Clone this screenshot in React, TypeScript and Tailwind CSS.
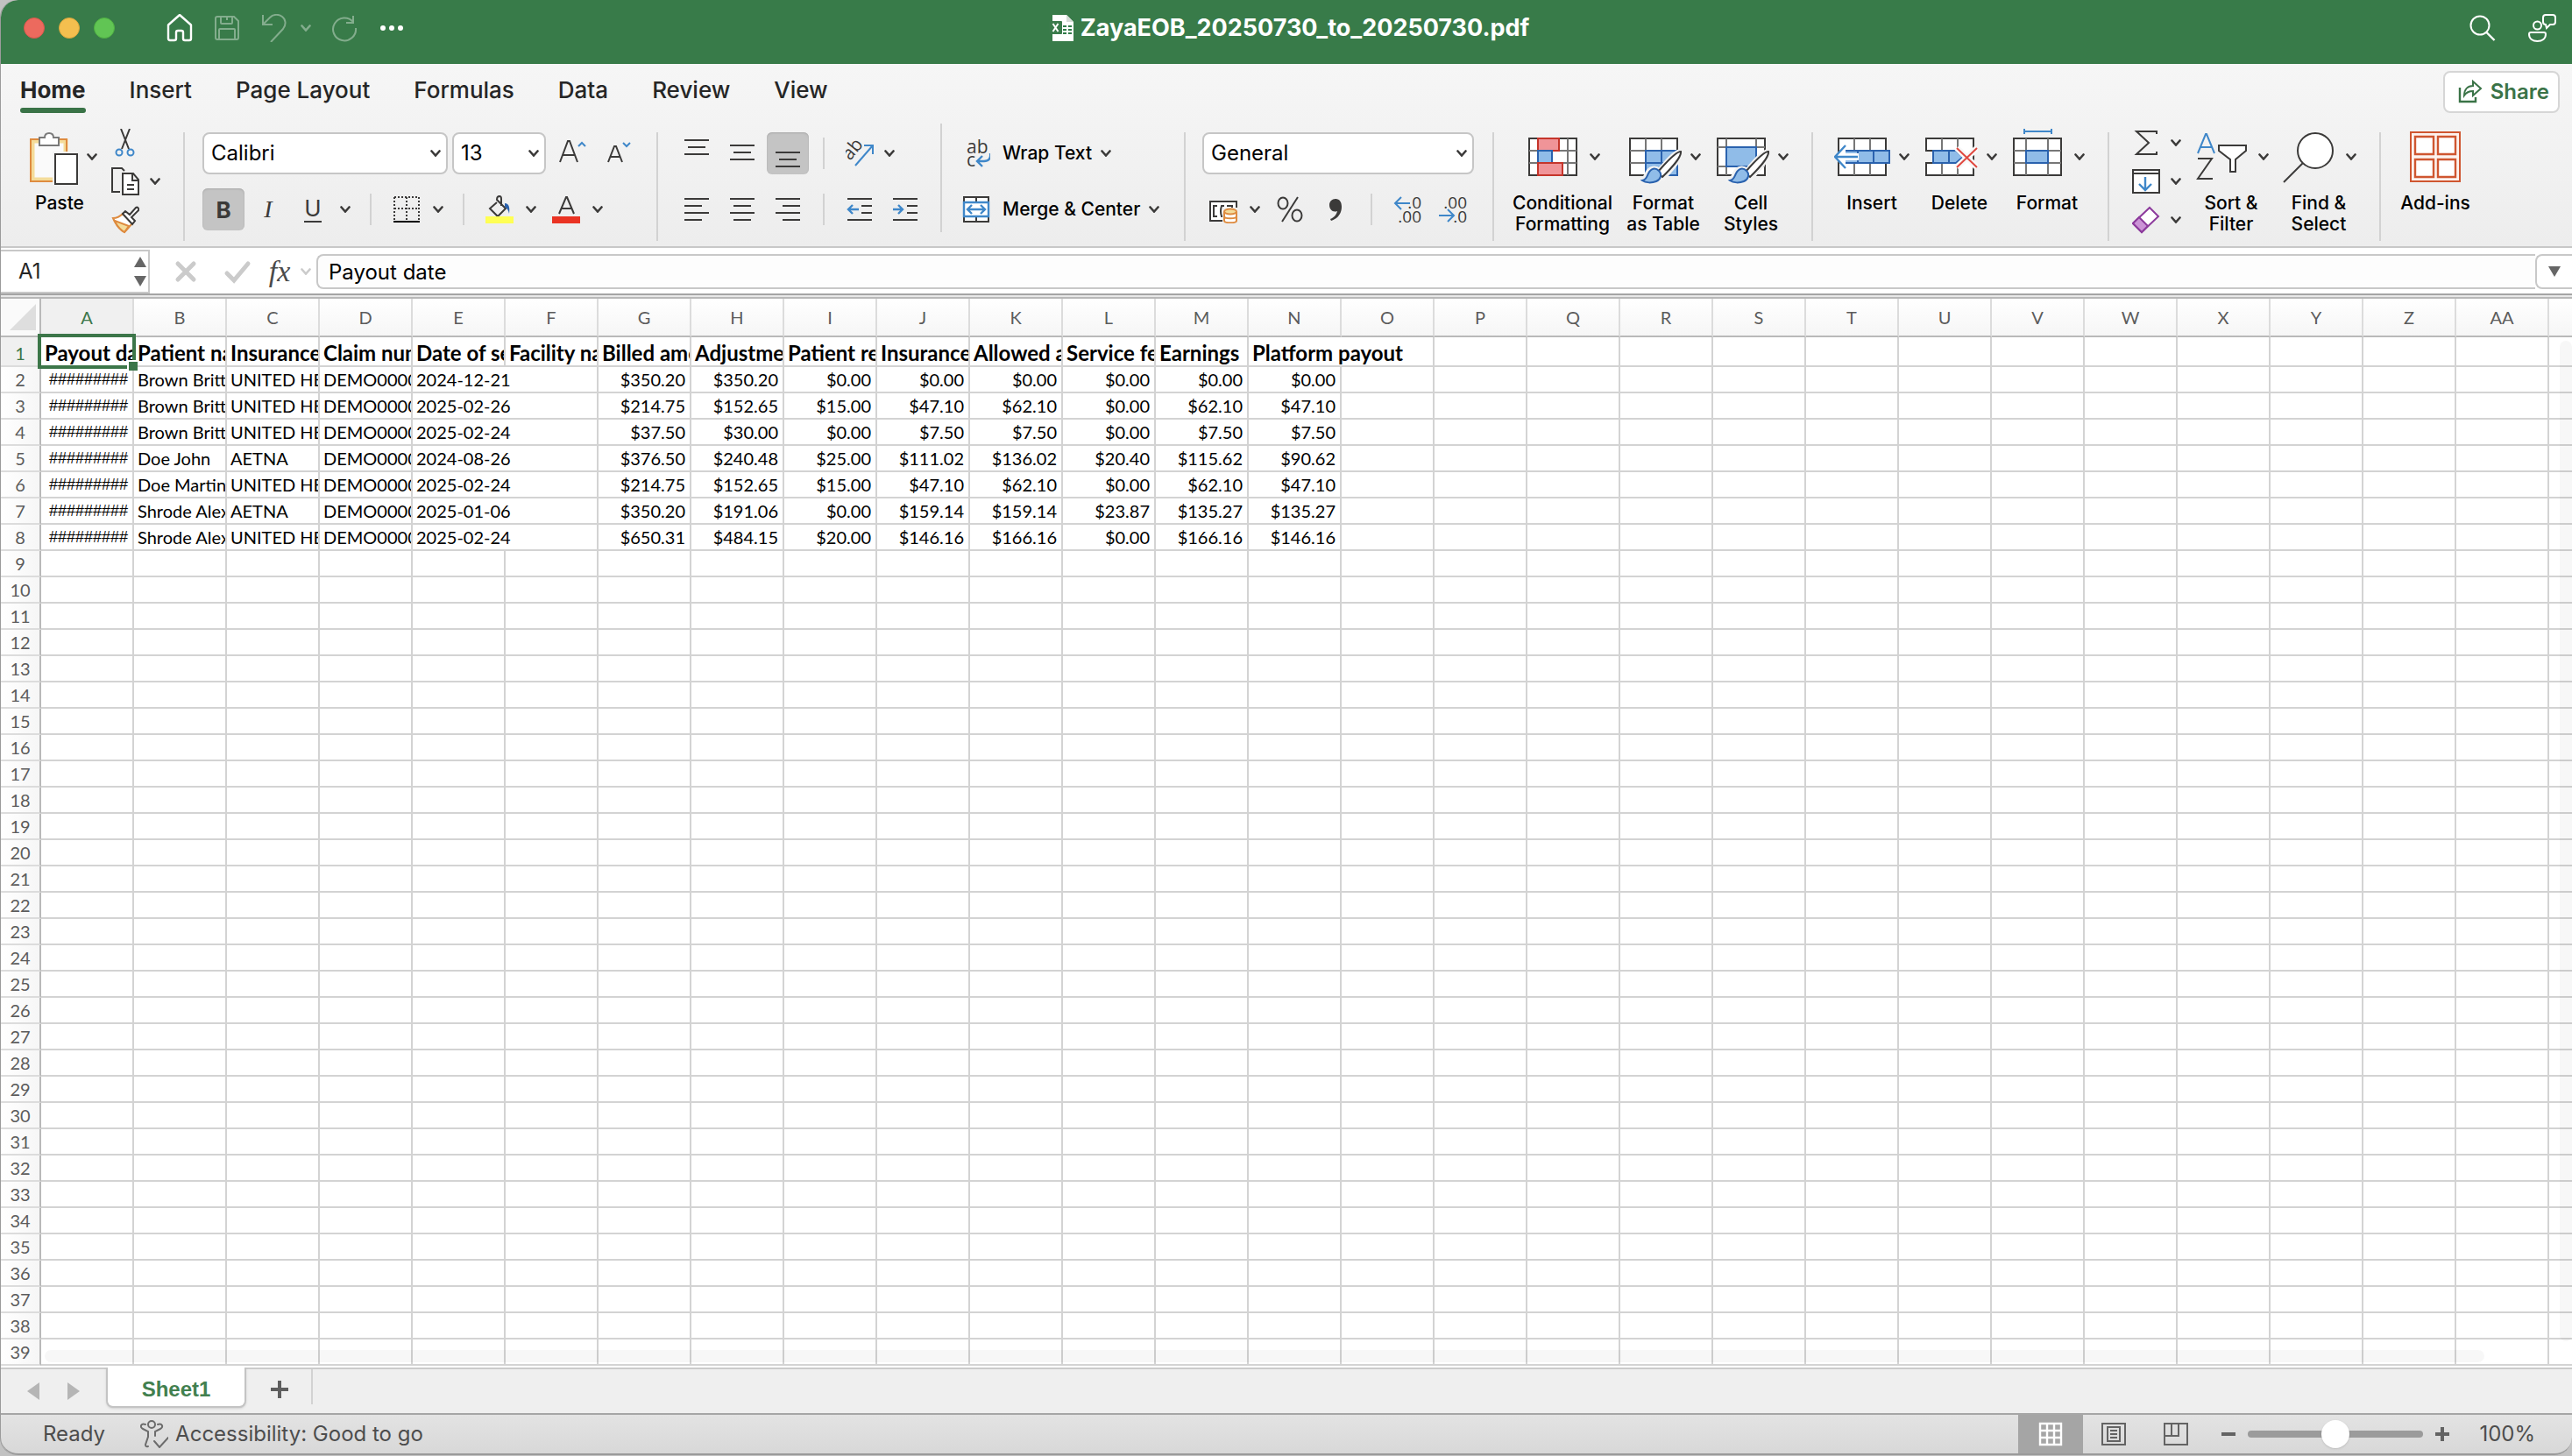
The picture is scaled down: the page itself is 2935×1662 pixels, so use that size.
import { useState, type ReactNode } from "react"

const DARK = "#3b3a39"
const BLUE = "#3f87c9"
const NAVY = "#2a62ae"
const SKY = "#90bce8"

const tabs = [
  "Home",
  "Insert",
  "Page Layout",
  "Formulas",
  "Data",
  "Review",
  "View",
]

const columns = [..."ABCDEFGHIJKLMNOPQRSTUVWXYZ", "AA", ""]
const rowCount = 39

const headings = [
  "Payout date",
  "Patient name",
  "Insurance name",
  "Claim number",
  "Date of service",
  "Facility name",
  "Billed amount",
  "Adjustments",
  "Patient responsibility",
  "Insurance payment",
  "Allowed amount",
  "Service fee",
  "Earnings",
  "Platform payout",
]

const records = [
  ["Brown Brittany", "UNITED HEALTHCARE", "2024-12-21", "$350.20", "$350.20", "$0.00", "$0.00", "$0.00", "$0.00", "$0.00", "$0.00"],
  ["Brown Brittany", "UNITED HEALTHCARE", "2025-02-26", "$214.75", "$152.65", "$15.00", "$47.10", "$62.10", "$0.00", "$62.10", "$47.10"],
  ["Brown Brittany", "UNITED HEALTHCARE", "2025-02-24", "$37.50", "$30.00", "$0.00", "$7.50", "$7.50", "$0.00", "$7.50", "$7.50"],
  ["Doe John", "AETNA", "2024-08-26", "$376.50", "$240.48", "$25.00", "$111.02", "$136.02", "$20.40", "$115.62", "$90.62"],
  ["Doe Martin", "UNITED HEALTHCARE", "2025-02-24", "$214.75", "$152.65", "$15.00", "$47.10", "$62.10", "$0.00", "$62.10", "$47.10"],
  ["Shrode Alex", "AETNA", "2025-01-06", "$350.20", "$191.06", "$0.00", "$159.14", "$159.14", "$23.87", "$135.27", "$135.27"],
  ["Shrode Alex", "UNITED HEALTHCARE", "2025-02-24", "$650.31", "$484.15", "$20.00", "$146.16", "$166.16", "$0.00", "$166.16", "$146.16"],
]

function Icon({
  size = 32,
  stroke = DARK,
  children,
}: {
  size?: number
  stroke?: string
  children: ReactNode
}) {
  return (
    <svg
      width={size}
      height={size}
      viewBox={`0 0 ${size} ${size}`}
      fill="none"
      stroke={stroke}
      strokeWidth={2}
      className="shrink-0"
      aria-hidden="true"
    >
      {children}
    </svg>
  )
}

function Chevron({ color = DARK }: { color?: string }) {
  return (
    <svg
      width={12}
      height={8}
      viewBox="0 0 12 8"
      fill="none"
      stroke={color}
      strokeWidth={2.6}
      strokeLinecap="round"
      className="shrink-0"
      aria-hidden="true"
    >
      <path d="M1.5 1.5 6 6.5l4.5-5" />
    </svg>
  )
}

function MenuButton({ label, className = "" }: { label: string; className?: string }) {
  return (
    <button type="button" aria-label={label} className={className}>
      <Chevron />
    </button>
  )
}

function Separator({ className = "" }: { className?: string }) {
  return <div className={`w-0.5 shrink-0 bg-[#d2d2d2] ${className}`} />
}

function GroupSeparator() {
  return <Separator className="mt-2.5 h-[124px]" />
}

function ToolButton({
  label,
  active = false,
  children,
}: {
  label: string
  active?: boolean
  children: ReactNode
}) {
  return (
    <button
      type="button"
      aria-label={label}
      aria-pressed={active}
      className={`flex size-12 shrink-0 items-center justify-center rounded-md ${
        active ? "bg-[#c4c4c4] shadow-[inset_0_1px_2px_#a8a8a8]" : ""
      }`}
    >
      {children}
    </button>
  )
}

function BigButton({
  lines,
  icon,
  menu = true,
  className = "",
}: {
  lines: string[]
  icon: ReactNode
  menu?: boolean
  className?: string
}) {
  return (
    <button
      type="button"
      className={`mt-1.5 flex shrink-0 flex-col items-center gap-[9px] self-start text-[21px] leading-6 font-medium whitespace-nowrap text-black ${
        menu ? "w-[86px]" : "w-16"
      } ${className}`}
    >
      <span className="flex items-center gap-2.5">
        <Icon size={64}>{icon}</Icon>
        {menu && <Chevron />}
      </span>
      <span className="flex flex-col items-center">
        {lines.map(line => (
          <span key={line}>{line}</span>
        ))}
      </span>
    </button>
  )
}

function StackItem({
  label,
  menu = true,
  children,
}: {
  label: string
  menu?: boolean
  children: ReactNode
}) {
  return (
    <div className="flex items-center gap-3">
      <button type="button" aria-label={label}>
        <Icon>{children}</Icon>
      </button>
      {menu && <MenuButton label={`${label} options`} />}
    </div>
  )
}

function Dropdown({
  label,
  value,
  className,
}: {
  label: string
  value: string
  className: string
}) {
  return (
    <div className={`relative h-12 shrink-0 ${className}`}>
      <select
        aria-label={label}
        defaultValue={value}
        className="size-full appearance-none rounded-lg border-2 border-[#c6c6c6] bg-white pr-8 pl-2 text-2xl text-black"
      >
        <option>{value}</option>
      </select>
      <span className="pointer-events-none absolute inset-y-0 right-2 flex items-center">
        <Chevron />
      </span>
    </div>
  )
}

function TitleBar() {
  return (
    <header className="grid h-[73px] grid-cols-[1fr_auto_1fr] rounded-tl-[20px] bg-[#387b49] pb-[9px] text-white">
      <div className="flex items-center pl-[26px]">
        <div className="flex gap-4">
          <button type="button" aria-label="Close" className="size-6 rounded-full border border-[#d8584c] bg-[#ec6a5e]" />
          <button type="button" aria-label="Minimize" className="size-6 rounded-full border border-[#dba63c] bg-[#f4bf4f]" />
          <button type="button" aria-label="Zoom" className="size-6 rounded-full border border-[#50b043] bg-[#61c554]" />
        </div>
        <div className="ml-[58px] flex items-center gap-[22px]">
          <button type="button" aria-label="Home">
            <Icon stroke="white">
              <path d="M3 12.5 16 1l13 11.500V28q0 2-2 2h-5q-2 0-2-2v-7q0-2-2-2h-4q-2 0-2 2v7q0 2-2 2H5q-2 0-2-2Z" strokeWidth={2.4} strokeLinejoin="round" />
            </Icon>
          </button>
          <button type="button" aria-label="Save">
            <Icon stroke="#83ad8d">
              <path d="M5 3h19l5 5v19q0 2-2 2H5q-2 0-2-2V5q0-2 2-2Z" />
              <path d="M9 3v7q0 1 1 1h11q1 0 1-1V3M16 3v4M7 29V18q0-1 1-1h16q1 0 1 1v11" />
            </Icon>
          </button>
          <button type="button" aria-label="Undo" className="flex items-center gap-3.5">
            <Icon stroke="#83ad8d">
              <path d="M3 1v11h11M3 12 11 4c4-4 10-4 14-1s5 9 1 14L12 32" />
            </Icon>
            <Chevron color="#83ad8d" />
          </button>
          <button type="button" aria-label="Redo">
            <Icon stroke="#83ad8d">
              <path d="M26 2v8h-8M26 9a13 13 0 1 0 3 7" />
            </Icon>
          </button>
          <button type="button" aria-label="More">
            <Icon stroke="none">
              <g fill="white">
                <circle cx="6" cy="16" r="3" />
                <circle cx="16" cy="16" r="3" />
                <circle cx="26" cy="16" r="3" />
              </g>
            </Icon>
          </button>
        </div>
      </div>
      <h1 className="flex items-center gap-1.5 pl-1 text-[27px] font-bold">
        <Icon stroke="none">
          <path d="M6 1h16l8 8v22H6Z" fill="white" />
          <path d="M22 1v8h8Z" fill="#d5dcd7" />
          <path d="M18 13h4v2h-4Zm6 0h4v2h-4Zm-6 4h4v2h-4Zm6 0h4v2h-4Zm-6 4h4v2h-4Zm6 0h4v2h-4Z" fill="#2f7a48" />
          <rect x="2" y="8" width="15" height="15" rx="1" fill="#3a7b4b" />
          <path d="m6.500 11 6 9M12.500 11l-6 9" stroke="white" strokeWidth={2} />
        </Icon>
        ZayaEOB_20250730_to_20250730.pdf
      </h1>
      <div className="flex items-center justify-end gap-9 pr-[18px]">
        <button type="button" aria-label="Search">
          <Icon stroke="white">
            <circle cx="13" cy="13" r="10.500" />
            <path d="m20.500 21 9 9" strokeWidth={2.4} />
          </Icon>
        </button>
        <button type="button" aria-label="Comments">
          <Icon stroke="white">
            <circle cx="10.500" cy="13" r="4.500" />
            <path d="M3 21h15q2 0 2 2c0 5-4 8-9.500 8S1 28 1 23q0-2 2-2Z" />
            <path d="M20 1h8q3 0 3 3v5q0 3-3 3h-3l-4 4-1-4q-3 0-3-3V4q0-3 3-3Z" />
          </Icon>
        </button>
      </div>
    </header>
  )
}

function Tabs({ active, onSelect }: { active: string; onSelect: (tab: string) => void }) {
  return (
    <div className="flex h-[68px] items-start justify-between pr-3.5 pl-[22px]">
      <nav className="flex gap-[50px] pt-3">
        {tabs.map(tab => (
          <button
            key={tab}
            type="button"
            onClick={() => onSelect(tab)}
            className={`flex flex-col text-[26px] leading-9 text-[#262626] ${
              active === tab ? "font-bold" : "font-medium"
            }`}
          >
            {tab}
            {active === tab && (
              <span className="mt-0.5 h-1.5 w-full rounded-full bg-[#3a7347]" />
            )}
          </button>
        ))}
      </nav>
      <button
        type="button"
        className="mt-2 flex h-12 items-center gap-2 rounded-lg border-2 border-[#d6d6d6] bg-white pr-2.5 pl-3 text-2xl font-semibold text-[#3a7347]"
      >
        <Icon stroke="#3a7347">
          <path d="M5 11v16h18v-5" strokeWidth={2.4} />
          <path d="M20 4l9 8-9 8v-5c-5 0-8 2-10 5 0-7 4-11 10-11Z" />
        </Icon>
        Share
      </button>
    </div>
  )
}

function ClipboardGroup() {
  return (
    <div className="flex w-[208px] shrink-0 pl-6">
      <BigButton
        lines={["Paste"]}
        icon={
          <>
            <rect x="12" y="14" width="38" height="44" fill="#fafafa" stroke="#f4dc9a" strokeWidth={5} />
            <rect x="10" y="12" width="41" height="48" stroke="#de8b3f" />
            <path d="M20 19v-9h6c0-3 2-5 5-5s5 2 5 5h6v9Z" fill="white" stroke="#7a7a7a" />
            <path d="M35 26h30v40H35Z" fill="#f3f3f3" stroke="none" />
            <rect x="38" y="29" width="25" height="34" fill="white" />
          </>
        }
      />
      <div className="mt-1.5 ml-4 flex flex-col gap-3">
        <StackItem label="Cut" menu={false}>
          <path d="m11 0 9 23M21 0l-9 23" />
          <circle cx="9" cy="27" r="3.500" stroke={BLUE} />
          <circle cx="22" cy="27" r="3.500" stroke={BLUE} />
        </StackItem>
        <StackItem label="Copy">
          <path d="M10 28H1V1h11l3 3" />
          <path d="M13 7h12l6 7v17H13ZM24 7v8h7M18 20h8M18 25h8" fill="white" />
        </StackItem>
        <StackItem label="Format Painter" menu={false}>
          <path d="M2 14c5 0 8-2 11-5l11 11c-3 3-5 6-9 10C9 27 5 21 2 14Z" fill="white" stroke="#de8b3f" />
          <path d="M4 17l16 6-5 7C10 27 6 22 4 17Z" fill="#f4dc9a" stroke="#de8b3f" />
          <path d="m13 9 3-3 5 4 7-8q2-1 3 1t-1 3l-7 7 4 4-3 4Z" fill="white" />
        </StackItem>
      </div>
    </div>
  )
}

function FontGroup() {
  return (
    <div className="flex w-[538px] shrink-0 flex-col gap-4 pt-2.5 pl-5">
      <div className="flex items-center">
        <Dropdown label="Font" value="Calibri" className="w-[280px]" />
        <Dropdown label="Font size" value="13" className="ml-[5px] w-[107px]" />
        <button type="button" aria-label="Increase font size" className="ml-3.5">
          <Icon>
            <path d="M2 26 11 2h2l9 24M5 18h14" />
            <path d="m23 8 4-4 4 4" stroke={BLUE} />
          </Icon>
        </button>
        <button type="button" aria-label="Decrease font size" className="ml-[22px]">
          <Icon>
            <path d="M3 26l7-18h2l7 18M5 20h12" />
            <path d="m20 4 4 4 4-4" stroke={BLUE} />
          </Icon>
        </button>
      </div>
      <div className="flex items-center text-[26px] text-[#3b3a39]">
        <div className="flex gap-[3px]">
          <ToolButton label="Bold" active>
            <span className="font-bold">B</span>
          </ToolButton>
          <ToolButton label="Italic">
            <span className="font-['Liberation_Serif',serif] text-[28px] italic">I</span>
          </ToolButton>
          <ToolButton label="Underline">
            <span className="border-b-2 border-[#3b3a39] leading-7">U</span>
          </ToolButton>
        </div>
        <MenuButton label="Underline styles" className="ml-[7px]" />
        <Separator className="ml-[22px] h-9" />
        <button type="button" aria-label="Borders" className="ml-6">
          <Icon>
            <path d="M2 2h28M2 2v26M30 2v26M16 2v26M2 15h28" strokeDasharray="2 2" />
            <path d="M1 30h30" stroke="black" />
          </Icon>
        </button>
        <MenuButton label="Border styles" className="ml-3.5" />
        <Separator className="ml-[22px] h-9" />
        <button type="button" aria-label="Fill color" className="ml-6">
          <Icon>
            <path d="M13 8 5 15l9 9 9-9-10-10q0-4 3-4 2 0 2 3v8" fill="none" />
            <path d="M22 9c5 0 6 5 5 12-1-4-2-6-5-8Z" fill={NAVY} stroke="none" />
            <path d="M0 24h32v8H0Z" fill="#ffff54" stroke="none" />
          </Icon>
        </button>
        <MenuButton label="Fill colors" className="ml-3.5" />
        <button type="button" aria-label="Font color" className="ml-[18px]">
          <Icon>
            <path d="m8 21 8-19h1l8 19M11 15h11" />
            <path d="M0 24h32v8H0Z" fill="#ea3323" stroke="none" />
          </Icon>
        </button>
        <MenuButton label="Font colors" className="ml-3.5" />
      </div>
    </div>
  )
}

function AlignmentGroup() {
  return (
    <div className="flex w-[322px] shrink-0 flex-col gap-4 pt-2.5 pl-5">
      <div className="flex items-center gap-1">
        <ToolButton label="Top align">
          <Icon>
            <path d="M2 1h28M6 9h20M2 17h28" />
          </Icon>
        </ToolButton>
        <ToolButton label="Middle align">
          <Icon>
            <path d="M2 7h28M6 15h20M2 23h28" />
          </Icon>
        </ToolButton>
        <ToolButton label="Bottom align" active>
          <Icon>
            <path d="M2 15h28M6 23h20M2 31h28" />
          </Icon>
        </ToolButton>
        <Separator className="mx-3 h-9" />
        <ToolButton label="Orientation">
          <Icon>
            <text x="0" y="0" transform="translate(5 25) rotate(-50)" fontSize="21" fill={DARK} stroke="none" fontFamily="Open Sans">
              ab
            </text>
            <path d="M11 30 31 7M21 7h10v10" stroke={BLUE} />
          </Icon>
        </ToolButton>
        <MenuButton label="Orientation options" />
      </div>
      <div className="flex items-center gap-1">
        <ToolButton label="Align left">
          <Icon>
            <path d="M2 4h28M2 12h20M2 20h28M2 28h20" />
          </Icon>
        </ToolButton>
        <ToolButton label="Center">
          <Icon>
            <path d="M2 4h28M6 12h20M2 20h28M6 28h20" />
          </Icon>
        </ToolButton>
        <ToolButton label="Align right">
          <Icon>
            <path d="M2 4h28M10 12h20M2 20h28M10 28h20" />
          </Icon>
        </ToolButton>
        <Separator className="mx-3 h-9" />
        <ToolButton label="Decrease indent">
          <Icon>
            <path d="M2 4h28M18 12h12M18 20h12M2 28h28" />
            <path d="M15 16H3M8 11l-5 5 5 5" stroke={BLUE} strokeWidth={2.4} />
          </Icon>
        </ToolButton>
        <ToolButton label="Increase indent">
          <Icon>
            <path d="M2 4h28M18 12h12M18 20h12M2 28h28" />
            <path d="M2 16h11M8 11l5 5-5 5" stroke={BLUE} strokeWidth={2.4} />
          </Icon>
        </ToolButton>
      </div>
    </div>
  )
}

function WrapGroup() {
  return (
    <div className="flex w-[276px] shrink-0 flex-col gap-4 pt-2.5 pl-[23px] text-[21px] font-medium text-black">
      <button type="button" className="flex h-12 items-center">
        <Icon>
          <text x="5" y="16" fontSize="21" fill={DARK} stroke="none" fontFamily="Open Sans">
            ab
          </text>
          <text x="5" y="31" fontSize="21" fill={DARK} stroke="none" fontFamily="Open Sans">
            c
          </text>
          <path d="M32 16c1 6-2 9-7 9h-7M23 19l-6 6 6 6" stroke={BLUE} strokeWidth={2.4} />
        </Icon>
        <span className="mr-2.5 ml-3.5">Wrap Text</span>
        <Chevron />
      </button>
      <button type="button" className="flex h-12 items-center">
        <Icon>
          <path d="M2 2h28v28H2ZM16 2v6M16 24v6" fill="white" />
          <path d="M2 8h28v16H2Z" fill="white" stroke={BLUE} strokeWidth={2.4} />
          <path d="M6 16h20M11 11l-5 5 5 5M21 11l5 5-5 5" stroke={BLUE} strokeWidth={2.4} />
        </Icon>
        <span className="mr-2.5 ml-3.5">Merge &amp; Center</span>
        <Chevron />
      </button>
    </div>
  )
}

function NumberGroup() {
  return (
    <div className="flex w-[350px] shrink-0 flex-col gap-4 pt-2.5 pl-[19px]">
      <Dropdown label="Number format" value="General" className="w-[310px]" />
      <div className="flex h-12 items-center pl-2">
        <button type="button" aria-label="Currency">
          <Icon>
            <rect x="1" y="7" width="30" height="22" fill="white" />
            <path d="M9 12H5v12h4M17 12h-3q-2 6 0 12h3M20 12h6v5" />
            <path d="M15 14h19v20H15Z" fill="#f0f0f0" stroke="none" />
            <path d="M17 19v10c0 3 14 3 14 0V19M17 24c0 3 14 3 14 0" fill="white" stroke="#de8b3f" />
            <ellipse cx="24" cy="18.500" rx="7" ry="3" fill="#f4dc9a" stroke="#de8b3f" />
          </Icon>
        </button>
        <MenuButton label="Currency formats" className="ml-3.5" />
        <button type="button" aria-label="Percent" className="ml-[18px]">
          <Icon>
            <ellipse cx="8" cy="9" rx="5.500" ry="6.500" />
            <ellipse cx="24" cy="23" rx="5.500" ry="6.500" />
            <path d="M25 2 7 30" />
          </Icon>
        </button>
        <button type="button" aria-label="Comma" className="ml-5">
          <Icon stroke="none">
            <path d="M16 4c5 0 7 4 7 9 0 8-5 14-12 16l-1-2c5-2 7-5 8-9-5 2-9-2-9-7 0-4 3-7 7-7Z" fill={DARK} />
          </Icon>
        </button>
        <Separator className="ml-6 h-9" />
        <button type="button" aria-label="Increase decimals" className="ml-6">
          <Icon>
            <text x="32" y="15" textAnchor="end" fontSize="19" fill={DARK} stroke="none" fontFamily="Open Sans">.0</text>
            <text x="32" y="31" textAnchor="end" fontSize="19" fill={DARK} stroke="none" fontFamily="Open Sans">.00</text>
            <path d="M19 9H2M9 2 2 9l7 7" stroke={BLUE} />
          </Icon>
        </button>
        <button type="button" aria-label="Decrease decimals" className="ml-5">
          <Icon>
            <text x="32" y="15" textAnchor="end" fontSize="19" fill={DARK} stroke="none" fontFamily="Open Sans">.00</text>
            <text x="32" y="31" textAnchor="end" fontSize="19" fill={DARK} stroke="none" fontFamily="Open Sans">.0</text>
            <path d="M0 23h17M10 16l7 7-7 7" stroke={BLUE} />
          </Icon>
        </button>
      </div>
    </div>
  )
}

function Brush() {
  return (
    <>
      <path d="M63 26C56 26 42 44 36 51l7 5C51 47 64 33 63 26Z" fill="white" stroke="#f2f2f2" strokeWidth={6} />
      <path d="M18 59c5-1 5-4 7-8 3-6 9-7 13-3s2 10-3 13c-5 2-13 2-17-2Z" fill={SKY} stroke="#f2f2f2" strokeWidth={6} />
      <path d="M63 26C56 26 42 44 36 50l6 5C51 46 64 33 63 26Z" fill="white" />
      <path d="M19 59c5-1 5-4 7-8 3-6 8-7 12-3s2 10-3 12c-5 2-12 2-16-1Z" fill={SKY} stroke={NAVY} />
    </>
  )
}

function StylesGroup() {
  return (
    <div className="flex w-[362px] shrink-0 gap-3.5 pl-[35px]">
      <BigButton
        lines={["Conditional", "Formatting"]}
        className="mr-[15px]"
        icon={
          <>
            <rect x="5" y="11" width="54" height="42" fill="white" />
            <path d="M5 25h54M5 39h54M49 11v42" stroke="#777" />
            <rect x="28" y="26" width="20" height="12" fill="white" stroke="none" />
            <rect x="15" y="11" width="24" height="14" fill="#f09498" stroke="#c5352b" />
            <rect x="15" y="25" width="16" height="14" fill={SKY} stroke={NAVY} />
            <rect x="15" y="39" width="28" height="14" fill="#f09498" stroke="#c5352b" />
          </>
        }
      />
      <BigButton
        lines={["Format", "as Table"]}
        icon={
          <>
            <rect x="5" y="11" width="54" height="42" fill="white" />
            <path d="M5 25h54M5 39h18M23 11v42M41 11v14" stroke="#777" />
            <path d="M23 25h36v28H23ZM23 39h36M41 25v28" fill={SKY} stroke={NAVY} />
            <Brush />
          </>
        }
      />
      <BigButton
        lines={["Cell", "Styles"]}
        icon={
          <>
            <rect x="5" y="11" width="54" height="42" fill="white" />
            <path d="M5 21h54M5 43h54M15 11v42M49 11v42" stroke="#777" />
            <rect x="15" y="21" width="34" height="22" fill={SKY} stroke={NAVY} />
            <Brush />
          </>
        }
      />
    </div>
  )
}

function CellsGroup() {
  return (
    <div className="flex w-[336px] shrink-0 gap-3.5 pl-6">
      <BigButton
        lines={["Insert"]}
        icon={
          <>
            <rect x="5" y="11" width="54" height="42" fill="white" />
            <path d="M23 11v42M41 11v42" stroke="#777" />
            <path d="M10 25h53v14H10ZM27 25v14M45 25v14" fill={SKY} stroke={NAVY} />
            <path d="M13 17 0 32l13 15V36h15v-8H13Z" fill="white" stroke="none" />
            <path d="M27 32H1M13 19 1 32l12 13" stroke={BLUE} strokeWidth={2.4} />
          </>
        }
      />
      <BigButton
        lines={["Delete"]}
        icon={
          <>
            <path d="M5 25V11h54v42H5V39h8V25Z" fill="white" />
            <path d="M23 11v14M41 11v14M23 39v14M41 39v14" stroke="#777" />
            <path d="M13 25h26l8 7-8 7H13ZM31 25v14" fill={SKY} stroke={NAVY} />
            <path d="m40 22 23 22M63 22 40 44" stroke="#f8f8f8" strokeWidth={7} />
            <path d="m40 22 23 22M63 22 40 44" stroke="#e0483f" />
          </>
        }
      />
      <BigButton
        lines={["Format"]}
        icon={
          <>
            <path d="M17 3h31M17 0v6M48 0v6" stroke={BLUE} />
            <rect x="5" y="11" width="54" height="42" fill="white" />
            <path d="M5 25h54M5 39h54M19 11v42M44 11v42" stroke="#777" />
            <rect x="19" y="25" width="25" height="14" fill={SKY} stroke={NAVY} />
          </>
        }
      />
    </div>
  )
}

function EditingGroup() {
  return (
    <div className="flex w-[308px] shrink-0 gap-3.5 pl-[26px]">
      <div className="mt-1.5 flex flex-col gap-3">
        <StackItem label="AutoSum">
          <path d="M28 6V3H5l14 13L5 29h23v-3" />
        </StackItem>
        <StackItem label="Fill">
          <path d="M1 3h30v26H1ZM1 7h30" fill="white" />
          <path d="M15 11v15M8 19l7 7 7-7" stroke={BLUE} strokeWidth={2.4} />
        </StackItem>
        <StackItem label="Clear">
          <path d="M20 2 30 12 11 30 1 20Z" fill="white" stroke="#8c3a9c" />
          <path d="m8 13 10 10-7 7L1 20Z" fill="#cb93d6" stroke="#8c3a9c" />
        </StackItem>
      </div>
      <BigButton
        lines={["Sort &", "Filter"]}
        icon={
          <>
            <path d="m5 28 9-22h1l9 22M8 21h13" stroke={BLUE} />
            <path d="M5 34h16L5 57h17" />
            <path d="M29 19h31v6L48 35v14h-6V35L29 25Z" fill="white" />
          </>
        }
      />
      <BigButton
        lines={["Find &", "Select"]}
        icon={
          <>
            <circle cx="39" cy="25" r="20" fill="white" />
            <path d="M25 39 3 61" />
          </>
        }
      />
    </div>
  )
}

function Ribbon() {
  const [tab, setTab] = useState("Home")

  return (
    <section className="flex h-[210px] flex-col overflow-hidden border-b-2 border-[#c8c8c8] bg-linear-to-b from-[#f6f6f6] to-[#ededed]">
      <Tabs active={tab} onSelect={setTab} />
      <div className="flex flex-1 items-start">
        <ClipboardGroup />
        <GroupSeparator />
        <FontGroup />
        <GroupSeparator />
        <AlignmentGroup />
        <Separator className="h-[124px]" />
        <WrapGroup />
        <GroupSeparator />
        <NumberGroup />
        <GroupSeparator />
        <StylesGroup />
        <GroupSeparator />
        <CellsGroup />
        <GroupSeparator />
        <EditingGroup />
        <GroupSeparator />
        <BigButton
          lines={["Add-ins"]}
          menu={false}
          className="ml-[30px]"
          icon={
            <>
              <rect x="4" y="4" width="56" height="56" fill="#fdf3ef" stroke="#cf5630" />
              <path d="M9 9h21v20H9ZM35 9h20v20H35ZM9 35h21v20H9ZM35 35h20v20H35Z" fill="white" stroke="#cf5630" strokeWidth={2.4} />
            </>
          }
        />
      </div>
    </section>
  )
}

function Triangle({ points, color = "#666" }: { points: string; color?: string }) {
  return (
    <svg width={14} height={12} viewBox="0 0 14 12" aria-hidden="true">
      <polygon points={points} fill={color} />
    </svg>
  )
}

function FormulaBar() {
  return (
    <section className="flex h-[58px] flex-col bg-white">
      <div className="flex h-[52px] items-center pt-0.5">
        <div className="flex h-full w-[170px] items-center border-y-2 border-r-2 border-[#c8c8c8] pr-0.5 pl-5">
          <input
            aria-label="Name box"
            defaultValue="A1"
            className="min-w-0 flex-1 text-2xl text-[#262626] outline-none"
          />
          <div className="flex flex-col gap-2.5">
            <Triangle points="7,0 14,12 0,12" />
            <Triangle points="0,0 14,0 7,12" />
          </div>
        </div>
        <button type="button" aria-label="Cancel" className="ml-[25px]">
          <Icon stroke="#cbcbcb">
            <path d="m7 7 18 18M25 7 7 25" strokeWidth={5} strokeLinecap="round" />
          </Icon>
        </button>
        <button type="button" aria-label="Enter" className="ml-[27px]">
          <Icon stroke="#cbcbcb">
            <path d="m4 18 8 8L28 7" strokeWidth={5} strokeLinecap="round" />
          </Icon>
        </button>
        <button
          type="button"
          aria-label="Insert function"
          className="ml-4 w-8 font-['Liberation_Serif',serif] text-[34px] leading-9 text-[#4a4a4a] italic"
        >
          fx
        </button>
        <button type="button" aria-label="Recent functions" className="ml-2">
          <Chevron color="#cbcbcb" />
        </button>
        <input
          aria-label="Formula"
          defaultValue="Payout date"
          className="ml-1.5 h-10 min-w-0 flex-1 rounded-l-lg border-y-2 border-l-2 border-[#c8c8c8] bg-[#fdfdfd] pl-3 text-2xl text-black outline-none"
        />
        <button
          type="button"
          aria-label="Expand formula bar"
          className="flex h-10 w-[42px] items-center justify-center rounded-l-lg border-y-2 border-l-2 border-[#c8c8c8]"
        >
          <Triangle points="0,0 14,0 7,12" />
        </button>
      </div>
      <div className="h-1.5 border-t-2 border-b-2 border-t-[#a4a4a4] border-b-[#b8b8b8] bg-[#e8e8e8]" />
    </section>
  )
}

function Cell({
  children,
  align = "left",
  bold = false,
  span = 1,
}: {
  children?: ReactNode
  align?: "left" | "right"
  bold?: boolean
  span?: number
}) {
  return (
    <td
      colSpan={span}
      className={`overflow-hidden border-r-2 border-b-2 border-[#d3d3d3] pr-[5px] pl-1 whitespace-nowrap ${
        align === "right" ? "text-right" : "text-left"
      } ${bold ? "pt-1 text-2xl leading-7 font-bold" : ""}`}
    >
      {children}
    </td>
  )
}

function EmptyCells({ count }: { count: number }) {
  return Array.from({ length: count }, (_, i) => <Cell key={i} />)
}

function RowCells({ row }: { row: number }) {
  if (row === 1) {
    return (
      <>
        <td className="relative border-r-2 border-b-2 border-[#d3d3d3] pt-1 pl-1 text-left text-2xl leading-7 font-bold whitespace-nowrap">
          <div className="overflow-hidden">{headings[0]}</div>
          <div className="absolute -inset-1 border-4 border-[#3c7649]" />
          <div className="absolute -right-1.5 -bottom-1.5 size-3 border-t-2 border-l-2 border-white bg-[#3c7649]" />
        </td>
        {headings.slice(1, 13).map((heading, i) => (
          <Cell key={i} bold>
            {heading}
          </Cell>
        ))}
        <Cell bold span={2}>
          {headings[13]}
        </Cell>
        <EmptyCells count={13} />
      </>
    )
  }

  const record = records[row - 2]
  if (!record) return <EmptyCells count={columns.length} />

  const [patient, insurance, date, ...amounts] = record
  return (
    <>
      <Cell align="right">
        <span className="font-['Liberation_Sans',sans-serif] text-lg">#########</span>
      </Cell>
      <Cell>{patient}</Cell>
      <Cell>{insurance}</Cell>
      <Cell>DEMO00001</Cell>
      {/* The date runs over into the empty facility column */}
      <Cell span={2}>{date}</Cell>
      {amounts.map((amount, i) => (
        <Cell key={i} align="right">
          {amount}
        </Cell>
      ))}
      <EmptyCells count={14} />
    </>
  )
}

function Sheet() {
  return (
    <main className="relative flex-1 overflow-hidden bg-white pb-0.5">
      <table className="w-full table-fixed border-separate border-spacing-0 font-[Lato,sans-serif] text-xl leading-6 text-black [&_tr>*:last-child]:border-r-0">
        <colgroup>
          <col className="w-[46px]" />
          {columns.map((name, i) => (
            <col key={i} className={name ? "w-[106px]" : ""} />
          ))}
        </colgroup>
        <thead>
          <tr className="h-11">
            <th className="border-r-2 border-b-2 border-[#b9b9b9] bg-[#fafafa] p-0">
              <svg width={30} height={30} viewBox="0 0 30 30" className="ml-2.5" aria-label="Select all">
                <polygon points="30,0 30,30 0,30" fill="#dedede" />
              </svg>
            </th>
            {columns.map((name, i) => (
              <th
                key={i}
                className={`border-r-2 border-b-2 border-r-[#dcdcdc] border-b-[#b9b9b9] p-0 font-normal ${
                  name === "A"
                    ? "bg-[#f0f0f0] text-[#3c7649]"
                    : "bg-linear-to-b from-white to-[#f6f6f6] text-[#5c5c5c]"
                }`}
              >
                {name}
              </th>
            ))}
          </tr>
        </thead>
        <tbody>
          {Array.from({ length: rowCount }, (_, i) => i + 1).map(row => (
            <tr key={row} className={row === 1 ? "h-[34px]" : "h-[30px]"}>
              <th
                className={`border-r-2 border-b-2 border-r-[#b9b9b9] border-b-[#dcdcdc] p-0 font-normal ${
                  row === 1
                    ? "bg-[#f0f0f0] pt-1 text-[#3c7649]"
                    : "bg-linear-to-r from-white to-[#f6f6f6] text-[#5c5c5c]"
                }`}
              >
                {row}
              </th>
              <RowCells row={row} />
            </tr>
          ))}
        </tbody>
      </table>
      {/* Faded overlay scroll bars */}
      <div className="absolute right-[100px] bottom-1.5 left-[50px] h-3.5 rounded-full bg-black/3" />
      <div className="absolute top-12 right-0 bottom-[30px] w-3.5 rounded-full bg-black/3" />
    </main>
  )
}

function SheetTabs() {
  return (
    <nav className="flex h-[52px] items-start border-t-2 border-[#cbcbcb] bg-[#efefef]">
      <div className="flex h-[50px] items-center gap-8 pl-[30px]">
        <button type="button" aria-label="Previous sheet">
          <svg width={14} height={20} viewBox="0 0 14 20" aria-hidden="true">
            <polygon points="14,0 14,20 0,10" fill="#b5b5b5" />
          </svg>
        </button>
        <button type="button" aria-label="Next sheet">
          <svg width={14} height={20} viewBox="0 0 14 20" aria-hidden="true">
            <polygon points="0,0 0,20 14,10" fill="#b5b5b5" />
          </svg>
        </button>
      </div>
      <button
        type="button"
        className="-mt-0.5 ml-[30px] h-[46px] w-40 rounded-b-lg border-2 border-t-0 border-[#c4c4c4] bg-white pt-1.5 font-['Liberation_Sans',sans-serif] text-2xl font-bold text-[#42804f] shadow-sm"
      >
        Sheet1
      </button>
      <button type="button" aria-label="Add sheet" className="mt-[13px] ml-7">
        <svg width={20} height={20} viewBox="0 0 20 20" stroke="#5e5e5e" strokeWidth={4} aria-hidden="true">
          <path d="M10 0v20M0 10h20" />
        </svg>
      </button>
      <Separator className="ml-[26px] h-10" />
    </nav>
  )
}

function StatusBar() {
  const [zoom, setZoom] = useState(100)

  return (
    <footer className="flex h-12 items-center rounded-b-[20px] border-t-2 border-b-2 border-t-[#a6a6a6] border-b-[#9b9b9b] bg-linear-to-b from-[#e3e3e3] to-[#d8d8d8] pr-[42px] pl-12 text-2xl text-[#4d4d4d]">
      <span>Ready</span>
      <button type="button" className="ml-10 flex items-center gap-2">
        <Icon stroke="#6c6c6c">
          <circle cx="13" cy="5" r="4" />
          <path d="M6 5C1 3-1 8 3 10l6 3v6l-3 9q0 3 3 2M20 5c5-2 7 3 3 5l-6 3v5" strokeLinecap="round" />
          <path d="m16 24 6 7 10-11" strokeLinecap="round" />
        </Icon>
        Accessibility: Good to go
      </button>
      <div className="ml-auto flex h-full items-center">
        <button type="button" aria-label="Normal view" className="flex h-full w-[74px] items-center justify-center bg-[#a5a5a5]">
          <Icon stroke="white">
            <path d="M4 4h24v24H4ZM12 4v24M20 4v24M4 12h24M4 20h24" strokeWidth={2.4} />
          </Icon>
        </button>
        <button type="button" aria-label="Page layout view" className="ml-[19px]">
          <Icon stroke="#636363">
            <path d="M3 4h26v24H3ZM9 8h14v16H9ZM12 12h8M12 16h8M12 20h8" />
          </Icon>
        </button>
        <button type="button" aria-label="Page break view" className="ml-[39px]">
          <Icon stroke="#636363">
            <path d="M3 4h26v24H3ZM3 18h16V4M11 4v14" />
          </Icon>
        </button>
        <button type="button" aria-label="Zoom out" className="ml-9 h-1 w-4 bg-[#636363]" />
        <input
          type="range"
          aria-label="Zoom"
          min={10}
          max={190}
          value={zoom}
          onChange={e => setZoom(Number(e.target.value))}
          className="mx-3.5 w-[200px] appearance-none bg-transparent [&::-webkit-slider-runnable-track]:h-2 [&::-webkit-slider-runnable-track]:rounded-full [&::-webkit-slider-runnable-track]:bg-[#9b9b9b] [&::-webkit-slider-thumb]:-mt-3 [&::-webkit-slider-thumb]:size-8 [&::-webkit-slider-thumb]:appearance-none [&::-webkit-slider-thumb]:rounded-full [&::-webkit-slider-thumb]:bg-white [&::-webkit-slider-thumb]:shadow"
        />
        <button type="button" aria-label="Zoom in">
          <svg width={16} height={16} viewBox="0 0 16 16" stroke="#636363" strokeWidth={4} aria-hidden="true">
            <path d="M8 0v16M0 8h16" />
          </svg>
        </button>
        <span className="ml-[34px]">{zoom}%</span>
      </div>
    </footer>
  )
}

export default function App() {
  return (
    <div className="flex min-h-screen flex-col bg-[#c2c2c2] pb-px font-[Inter,sans-serif]">
      <div className="flex flex-1 flex-col overflow-hidden rounded-tl-[20px] rounded-b-[20px] border-l border-[#9b9b9b]">
        <TitleBar />
        <Ribbon />
        <FormulaBar />
        <Sheet />
        <SheetTabs />
        <StatusBar />
      </div>
    </div>
  )
}
